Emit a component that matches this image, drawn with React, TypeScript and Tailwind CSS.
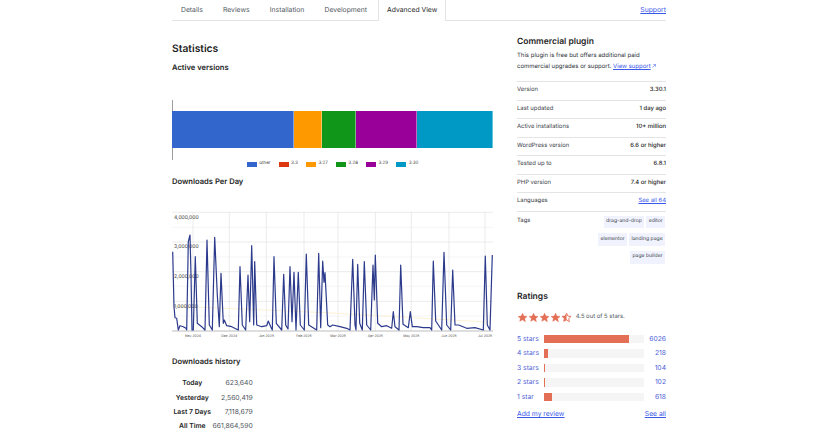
const tabs = ['Details', 'Reviews', 'Installation', 'Development']

const segments = [
  { w: 121.7, color: 'bg-[#3366cc]' },
  { w: 28.6, color: 'bg-[#ff9900]' },
  { w: 34, color: 'bg-[#109618]' },
  { w: 61, color: 'bg-[#990099]' },
  { w: 75.7, color: 'bg-[#0099c6]' },
]

const legend = [
  { label: 'other', color: 'bg-[#3366cc]' },
  { label: '3.3', color: 'bg-[#dc3912]' },
  { label: '3.27', color: 'bg-[#ff9900]' },
  { label: '3.28', color: 'bg-[#109618]' },
  { label: '3.29', color: 'bg-[#990099]' },
  { label: '3.30', color: 'bg-[#0099c6]' },
]

const left = [
  [38, 230], [42, 395], [45, 428], [50, 430], [55, 465], [60, 452], [70, 455], [78, 460], [80, 465], [85, 200], [90, 180], [93, 300], [96, 465], [100, 465], [106, 245], [112, 445], [125, 455], [135, 465], [141, 195], [148, 450], [157, 465], [164, 187], [172, 360], [178, 455], [183, 295], [190, 445], [193, 435], [200, 452], [215, 455], [235, 465], [240, 275], [247, 450], [257, 465], [264, 300], [269, 440], [275, 212], [281, 450], [284, 260], [290, 450], [305, 455], [320, 452], [325, 438], [332, 455], [337, 465], [342, 245], [349, 445], [365, 465], [371, 298], [377, 450], [384, 462], [390, 275], [396, 440], [402, 292], [408, 465], [415, 292], [421, 450], [433, 465], [439, 237], [446, 450], [470, 465], [476, 235], [482, 458], [488, 258], [492, 322], [495, 293], [503, 450],
]

const right = [
  [0, 455], [8, 450], [30, 455], [50, 460], [60, 465], [68, 253], [75, 450], [78, 465], [83, 268], [89, 445], [97, 465], [103, 260], [110, 450], [122, 465], [129, 270], [133, 375], [136, 240], [143, 445], [155, 455], [170, 452], [185, 460], [190, 410], [195, 455], [207, 465], [212, 270], [219, 448], [235, 458], [241, 410], [247, 455], [260, 455], [280, 458], [300, 458], [305, 465], [310, 258], [317, 438], [335, 465], [342, 232], [350, 450], [362, 465], [368, 285], [375, 450], [386, 450], [410, 460], [435, 458], [460, 465], [466, 243], [472, 450], [480, 465], [487, 240],
]

const linePoints = [
  ...left.map(([x, y]) => `${(x / 3 - 12).toFixed(1)},${(y / 3 - 30).toFixed(1)}`),
  ...right.map(([x, y]) => `${(x / 3 + 158).toFixed(1)},${(y / 3 - 30).toFixed(1)}`),
].join(' ')

const gridY = [7.3, 22.3, 37, 52, 66.7, 81.3, 96.3, 111]
const months = [
  { x: 21, t: 'Nov 2024' },
  { x: 57.3, t: 'Dec 2024' },
  { x: 94.3, t: 'Jan 2025' },
  { x: 132, t: 'Feb 2025' },
  { x: 166, t: 'Mar 2025' },
  { x: 203.3, t: 'Apr 2025' },
  { x: 239.3, t: 'May 2025' },
  { x: 277, t: 'Jun 2025' },
  { x: 313, t: 'Jul 2025' },
]
const yLabels = [
  { y: 13.5, t: '4,000,000' },
  { y: 42.8, t: '3,000,000' },
  { y: 72.8, t: '2,000,000' },
  { y: 102.5, t: '1,000,000' },
]

const DownloadsChart = () => (
  <svg width="321" height="135" viewBox="0 0 321 135" className="mt-[16.5px] block">
    {gridY.map((y, i) => (
      <line key={y} x1="0" x2="321" y1={y} y2={y} stroke={i % 2 === 0 ? '#ebebeb' : '#f5f5f5'} strokeWidth="1" />
    ))}
    {months.slice(1).map((m) => (
      <line key={m.t} x1={m.x} x2={m.x} y1="7" y2="126" stroke="#e6e6e6" strokeWidth="0.8" />
    ))}
    <line x1="21" x2="21" y1="7" y2="126" stroke="#e6e6e6" strokeWidth="0.8" />
    <line x1="0" x2="321" y1="126" y2="126" stroke="#bdbdbd" strokeWidth="1" />
    <polyline points="0,101 160,108 315,117" fill="none" stroke="#fcefcf" strokeWidth="0.9" />
    {yLabels.map((l) => (
      <text key={l.t} x="2" y={l.y} fontSize="5.04" fill="#444">
        {l.t}
      </text>
    ))}
    <polyline points={linePoints} fill="none" stroke="#2c3a8c" strokeWidth="1.2" strokeLinejoin="round" />
    {months.map((m) => (
      <text key={m.t} x={m.x} y="131.5" fontSize="3.44" fill="#555" textAnchor="middle">
        {m.t}
      </text>
    ))}
  </svg>
)

const Star = ({ half }: { half?: boolean }) => (
  <svg width="11.1" height="11" viewBox="0 0 24 24" className="shrink-0">
    <path
      d="M12 2.6l2.9 6.3 6.9.8-5.1 4.7 1.4 6.8L12 17.1l-6.1 3.1 1.4-6.8L2.2 9.7l6.9-.8z"
      fill={half ? 'none' : '#e26f56'}
      stroke="#e26f56"
      strokeWidth={half ? 2 : 1}
      strokeLinejoin="round"
    />
    {half && <path d="M12 2.6v14.5l-6.1 3.1 1.4-6.8L2.2 9.7l6.9-.8z" fill="#e26f56" />}
  </svg>
)

const meta = [
  { label: 'Version', value: '3.30.1' },
  { label: 'Last updated', value: '1 day ago' },
  { label: 'Active installations', value: '10+ million' },
  { label: 'WordPress version', value: '6.6 or higher' },
  { label: 'Tested up to', value: '6.8.1' },
  { label: 'PHP version', value: '7.4 or higher' },
]

const tags = ['drag-and-drop', 'editor', 'elementor', 'landing page', 'page builder']

const ratings = [
  { label: '5 stars', count: '6026', w: 85.4 },
  { label: '4 stars', count: '218', w: 3.7 },
  { label: '3 stars', count: '104', w: 1.3 },
  { label: '2 stars', count: '102', w: 1.3 },
  { label: '1 star', count: '618', w: 8 },
]

const history = [
  { label: 'Today', value: '623,640' },
  { label: 'Yesterday', value: '2,560,419' },
  { label: 'Last 7 Days', value: '7,118,679' },
  { label: 'All Time', value: '661,864,590' },
]

export default function App() {
  return (
    <div className="h-[434px] w-[818px] overflow-hidden bg-white pl-[172px] font-['Inter',sans-serif] text-[#1e1e1e] [text-rendering:geometricPrecision]">
      <div className="w-[494px]">
        <div className="flex h-[21px] items-stretch justify-between border-b border-[#e4e4e4]">
          <div className="flex pl-[9px]">
            {tabs.map((tab) => (
              <div key={tab} className="mr-[20.2px] flex h-[20px] items-center text-[6.8px] text-[#50575e]">
                {tab}
              </div>
            ))}
            <div className="ml-[-9px] flex h-[21px] w-[68px] items-center justify-center border-x border-[#e4e4e4] bg-white text-[6.8px]">
              Advanced View
            </div>
          </div>
          <a className="mt-[5px] text-[6.8px] leading-[10px] text-[#3858e9] underline">Support</a>
        </div>

        <div className="flex justify-between">
          <div className="w-[321px]">
            <h2 className="mt-[21px] text-[10.3px] leading-[14px] font-semibold">Statistics</h2>
            <h3 className="mt-[5.2px] text-[7.6px] leading-[13px] font-semibold">Active versions</h3>

            <div className="mt-[25.8px] h-[60px] border-l border-[#9e9e9e] pt-[11.5px]">
              <div className="ml-[-1px] flex h-[36.5px]">
                {segments.map((s) => (
                  <div key={s.color} className={`${s.color} border-r border-white/40`} style={{ width: s.w }} />
                ))}
              </div>
            </div>
            <div className="mt-[1.5px] flex h-[6px] items-center justify-center gap-[8px] text-[4.56px] leading-[6px] text-[#444]">
              {legend.map((l) => (
                <div key={l.label} className="flex h-[6px] items-center gap-[2.3px]">
                  <span className={`h-[5.3px] w-[10.3px] ${l.color}`} />
                  <span>{l.label}</span>
                </div>
              ))}
            </div>

            <h3 className="mt-[8px] text-[7.6px] leading-[13px] font-semibold">Downloads Per Day</h3>
            <DownloadsChart />

            <h3 className="mt-[15.2px] text-[7.6px] leading-[13px] font-semibold">Downloads history</h3>
            <table className="mt-[8px] w-[80.7px] table-fixed border-collapse text-[6.8px] whitespace-nowrap">
              <tbody>
                {history.map((row) => (
                  <tr key={row.label} className="h-[14.3px]">
                    <th className="w-[40.5px] p-0 text-center font-semibold">{row.label}</th>
                    <td className="p-0 text-right text-[#50575e]">{row.value}</td>
                  </tr>
                ))}
              </tbody>
            </table>
          </div>

          <div className="w-[149px]">
            <h3 className="mt-[15px] text-[8.5px] leading-[12px] font-semibold">Commercial plugin</h3>
            <p className="mt-[1.6px] text-[6px] leading-[11.4px] whitespace-nowrap text-[#2c3338]">
              This plugin is free but offers additional paid
              <br />
              commercial upgrades or support. <a className="text-[#3858e9] underline">View support</a>
              <svg width="4" height="4" viewBox="0 0 8 8" className="ml-[1.5px] inline-block align-baseline">
                <path d="M1 7l6-6M2.5 1H7v4.5" fill="none" stroke="#3858e9" strokeWidth="1" />
              </svg>
            </p>

            <div className="mt-[8.6px] border-t border-[#e4e4e4] text-[5.9px]">
              {meta.map((row) => (
                <div key={row.label} className="flex h-[18.5px] items-center justify-between border-b border-[#e4e4e4]">
                  <span className="text-[#3c434a]">{row.label}</span>
                  <span className="font-medium">{row.value}</span>
                </div>
              ))}
              <div className="flex h-[18.5px] items-center justify-between border-b border-[#e4e4e4]">
                <span className="text-[#3c434a]">Languages</span>
                <a className="text-[#3858e9] underline">See all 64</a>
              </div>
              <div className="flex justify-between pt-[4px]">
                <span className="mt-[1px] text-[#3c434a]">Tags</span>
                <div className="mr-[1px] flex w-[80px] flex-wrap justify-end gap-x-[2px] gap-y-[5px]">
                  {tags.map((tag) => (
                    <span key={tag} className="flex h-[12.7px] items-center bg-[#f0f2fd] px-[2.4px] text-[5.1px] text-[#3c434a]">
                      {tag}
                    </span>
                  ))}
                </div>
              </div>
            </div>

            <h3 className="mt-[27.6px] text-[8.5px] leading-[12px] font-semibold">Ratings</h3>
            <div className="mt-[8.9px] flex h-[11px] items-center">
              {[0, 1, 2, 3].map((i) => (
                <Star key={i} />
              ))}
              <Star half />
              <span className="ml-[3.2px] text-[5.9px] text-[#50575e]">4.5 out of 5 stars.</span>
            </div>

            <div className="mt-[10px] flex flex-col gap-[2.5px]">
              {ratings.map((r) => (
                <div key={r.label} className="flex h-[12px] items-center text-[6.75px] text-[#4f63d8]">
                  <span className="w-[27px]">{r.label}</span>
                  <div className="h-[8.7px] w-[100px] bg-[#f5f5f5]">
                    <div className="h-full bg-[#e26f56]" style={{ width: `${r.w}%` }} />
                  </div>
                  <span className="flex-1 text-right">{r.count}</span>
                </div>
              ))}
            </div>

            <div className="mt-[6px] flex justify-between text-[6.75px] leading-[10px] text-[#3858e9] underline">
              <a>Add my review</a>
              <a>See all</a>
            </div>
          </div>
        </div>
      </div>
    </div>
  )
}
